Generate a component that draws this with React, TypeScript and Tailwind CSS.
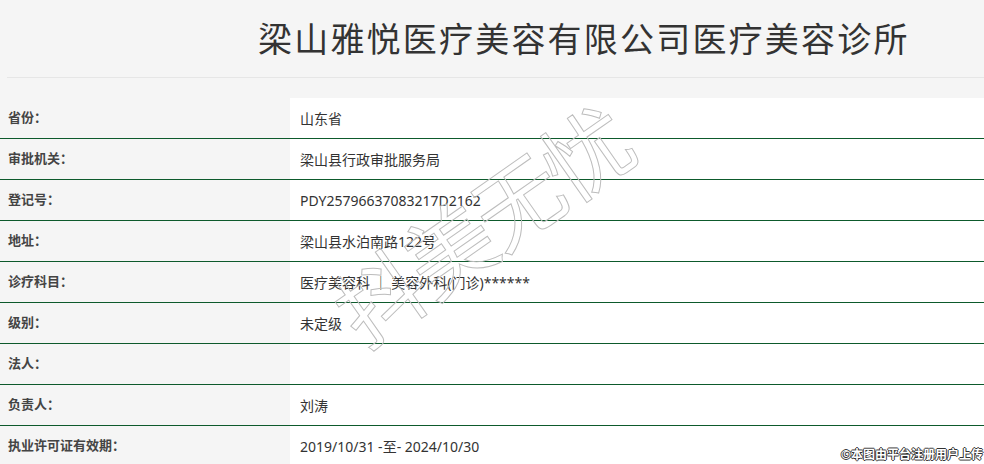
import React from 'react';

const rows: [string, string][] = [
  ['省份：', '山东省'],
  ['审批机关：', '梁山县行政审批服务局'],
  ['登记号：', 'PDY25796637083217D2162'],
  ['地址：', '梁山县水泊南路122号'],
  ['诊疗科目：', '医疗美容科 ｜ 美容外科(门诊)******'],
  ['级别：', '未定级'],
  ['法人：', ''],
  ['负责人：', '刘涛'],
  ['执业许可证有效期：', '2019/10/31 -至- 2024/10/30'],
];

export default function App() {
  return (
    <div className="relative h-[464px] w-[984px] overflow-hidden bg-[#f5f5f5] font-['Noto_Sans','Noto_Sans_CJK_SC',sans-serif] text-[#333]">
      <div className="ml-[7px] border-b border-[#e6e6e6] pb-[13px] pl-[251px] pt-[14px]">
        <h1 className="text-[34px] leading-[50px] font-normal tracking-[2.2px] text-[#333]">梁山雅悦医疗美容有限公司医疗美容诊所</h1>
      </div>

      <div className="mt-[20px]">
        {rows.map(([label, value]) => (
          <div key={label} className="flex h-[41px] border-b border-[#0d5a2c]">
            <div className="flex w-[290px] shrink-0 items-center pl-[8px] text-[13px] font-bold text-[#444]">{label}</div>
            <div className="flex flex-1 items-center bg-white pl-[10px] text-[14px] text-[#333]">{value}</div>
          </div>
        ))}
      </div>

      <div className="pointer-events-none absolute left-[482px] top-[226px] -translate-x-1/2 -translate-y-1/2 -rotate-[35deg] whitespace-nowrap text-[88px] leading-none tracking-[-4px] text-transparent [-webkit-text-stroke:1px_#bdbdbd]">
        抖美无忧
      </div>

      <div className="absolute bottom-[3px] right-[1px] text-[12px] font-bold leading-none text-white [text-shadow:1px_0_0_#333,-1px_0_0_#333,0_1px_0_#333,0_-1px_0_#333]">
        ©本图由平台注册用户上传
      </div>
    </div>
  );
}
